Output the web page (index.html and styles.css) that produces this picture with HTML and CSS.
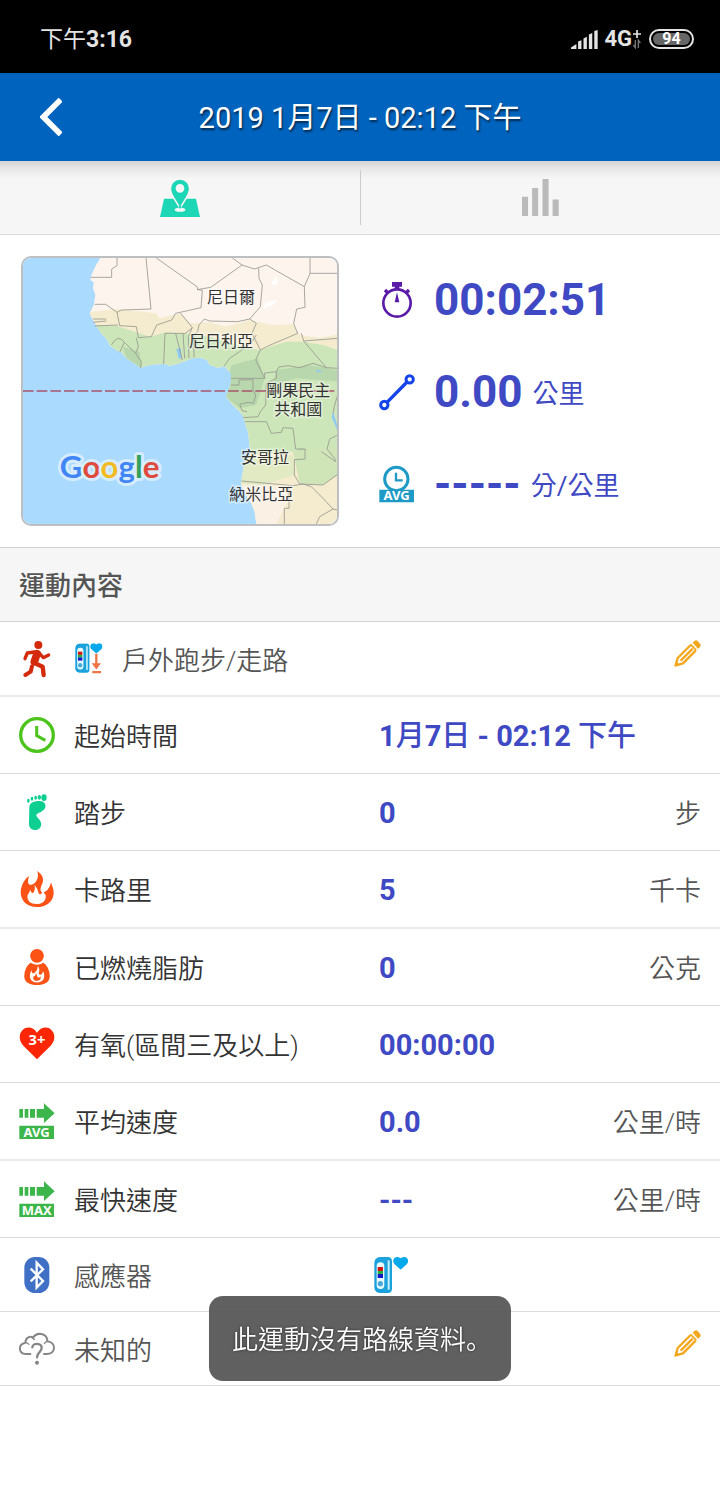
FILE: index.html
```html
<!DOCTYPE html>
<html lang="zh-Hant">
<head>
<meta charset="utf-8">
<meta name="viewport" content="width=device-width, initial-scale=1">
<title>2019 1月7日 - 02:12 下午</title>
<link rel="stylesheet" href="styles.css">
</head>
<body>
<svg class="defs" aria-hidden="true">
  <symbol id="band" viewBox="0 0 54 108">
    <path d="M10 2Q14 0 20 0H42Q53 0 54 12V96Q53 108 42 108H20Q12 108 8 105Q1 100 1 92V16Q2 6 10 2Z" fill="#1ba1dc"/>
    <path d="M44 10V98" stroke="#c4f0fb" stroke-width="6"/>
    <rect x="8" y="16" width="23" height="80" rx="11" fill="#e8fafe"/>
    <rect x="11" y="30" width="16" height="12" fill="#d4140c"/>
    <rect x="11" y="42" width="16" height="9" fill="#21b33a"/>
    <rect x="11" y="51" width="16" height="12" fill="#1414c8"/>
    <circle cx="19" cy="80" r="8" fill="#4aa9d8"/>
  </symbol>
  <symbol id="heart" viewBox="0 0 46 38">
    <path d="M23 38L4 21C-3 12 2 1 11 0C17 0 20 2 23 4C26 2 29 0 35 0C44 1 49 12 42 21Z" fill="#08a9ea"/>
  </symbol>
  <symbol id="pencil" viewBox="0 0 81 81">
    <g fill="none" stroke="#f2a71e" stroke-width="7" stroke-linejoin="round">
      <path d="M50 15L11 54L5 76L27 70L65 32"/>
      <path d="M20 62L56 26"/>
    </g>
    <path d="M56 8L61 3Q66 -2 71 3L78 11Q82 16 78 21L72 26Z" fill="#f2a71e"/>
    <path d="M50 13L67 31" stroke="#f2a71e" stroke-width="5"/>
    <path d="M1 80L6 64L17 75Z" fill="#f2a71e"/>
  </symbol>
  <symbol id="speed" viewBox="0 0 108 60">
    <path d="M1 18H12V44H1ZM17 18H28V44H17ZM33 18H48V44H33ZM53 18H75V1L107 31L75 60V44H53Z" fill="#3cb54a"/>
  </symbol>
</svg>

<div class="status">
  <span class="status__time">下午<b>3:16</b></span>
  <span class="status__side">
    <svg class="status__signal" viewBox="0 0 80 56"><path d="M0 56V52L16 41V56ZM21 34L31 30V56H21ZM37 25L47 20V56H37ZM53 13L63 9V56H53ZM69 3L79 0V56H69Z" fill="#e4e4e4"/></svg>
    <span class="status__net">4G</span>
    <svg class="status__plus" viewBox="0 0 30 60"><path d="M15 3V27M3 15H27" stroke="#e4e4e4" stroke-width="5"/><path d="M10 33V56L4 48M19 57V34L25 42" fill="none" stroke="#777" stroke-width="4"/></svg>
    <span class="battery"><span class="battery__level">94</span></span>
  </span>
</div>

<header class="bar">
  <button class="bar__back" type="button" aria-label="返回"><svg viewBox="0 0 66 114"><path d="M62 5L10 57L62 109" fill="none" stroke="#fff" stroke-width="17"/></svg></button>
  <h1 class="bar__title">2019 1月7日 - 02:12 下午</h1>
</header>

<nav class="tabs">
  <button class="tabs__item" type="button" aria-label="地圖">
    <svg class="tabs__map" viewBox="0 0 120 114">
      <path d="M12 59H108L120 114H0Z" fill="#1dd6b6"/>
      <path d="M60 0C42 0 31 13 31 29C31 48 46 61 60 88C74 61 89 48 89 29C89 13 78 0 60 0Z" fill="#1dd6b6" stroke="#f6f6f6" stroke-width="5"/>
      <circle cx="60" cy="28" r="13" fill="#f6f6f6"/>
      <ellipse cx="60" cy="92" rx="16" ry="6" fill="#f6f6f6"/>
      <path d="M55 80H65L60 91Z" fill="#1dd6b6"/>
    </svg>
  </button>
  <button class="tabs__item" type="button" aria-label="圖表">
    <svg class="tabs__chart" viewBox="0 0 110 110"><path d="M0 53H18V110H0ZM30 27H48V110H30ZM61 0H79V110H61ZM91 61H109V110H91Z" fill="#bababa"/></svg>
  </button>
</nav>

<main>
  <section class="summary">
    <div class="map">
      <svg class="map__art" viewBox="40 39 942 798" preserveAspectRatio="xMidYMid slice">
        <defs><clipPath id="land"><path id="coast" d="M272 39L258 62 245 90 242 105 252 112 250 130 257 150 252 180 240 205 250 225 262 245 275 265 290 280 300 300 318 315 335 322 350 340 378 358 393 369 410 362 440 358 465 357 480 362 500 358 522 350 548 340 575 338 592 345 600 360 625 368 645 364 655 375 664 385 664 410 660 425 655 440 650 455 665 475 685 495 700 512 705 530 715 560 720 600 722 620 705 650 700 680 694 715 705 745 725 775 735 800 740 837H990V30Z"/></clipPath></defs>
        <path d="M0 0H1000V900H0Z" fill="#abdaff"/>
        <g clip-path="url(#land)">
          <path d="M200 0H1000V900H200Z" fill="#fdf4ee"/>
          <path d="M230 202L320 192 400 200 440 205 450 220 510 205 545 235 600 232 650 245 720 225 790 240 850 238 870 270 930 278 1000 265V900H640V350L230 300Z" fill="#f5ecd0"/>
          <path d="M230 240L320 242 380 262 420 275 470 262 530 266 600 275 680 300 750 315 830 290 880 290 940 300 1000 320V640L850 620 700 630 600 380 390 400 230 290Z" fill="#cde6b9"/>
          <path d="M340 305L390 320 395 370 350 345ZM665 360L745 340 765 400 740 480 690 490 640 450ZM800 375L900 360 984 375 984 410 860 400 790 420ZM870 610L940 620 975 650 920 670 860 650Z" fill="#b9d7ad"/>
          <path d="M700 640L850 630 855 690 760 720 690 715Z" fill="#e1eac2"/>
          <path d="M850 620L984 600V690L940 720 870 715Z" fill="#cfe5b8"/>
          <path d="M690 720L820 725 835 765 800 837H730Z" fill="#faf0e4"/>
          <path d="M770 172L802 165 790 180 760 190ZM800 93L803 117 782 120Z" fill="#fff"/>
          <path d="M500 312L514 310 515 340 508 342ZM970 500L984 545 984 560 966 515ZM920 374L942 379 920 382Z" fill="#8fcaf5"/>
        </g>
        <g fill="none" stroke="#96978f" stroke-width="2.5">
          <path d="M322 39V62L306 72V97H243M409 39L424 192 335 195 322 202 288 178 255 178M440 39L562 125 564 134 578 136 574 188 498 205 486 225 441 240 425 275 386 278 380 245 330 242 322 202M562 134L603 127 697 60 668 39M697 60L734 72 770 60 884 125 901 85V39M901 85H984M884 125L886 187 861 192 852 236 864 265 775 303 752 315 727 265 740 235 720 222 684 230 600 228 584 222 568 240 564 260M747 70L748 100 758 120 752 185 720 222M513 205L548 248 526 266 520 266 525 340M548 248L536 275 538 340M564 260L552 270 553 338M466 265H520M466 265L462 357M498 265L518 345M250 222H290M250 232L290 228M255 243L325 240M380 278L386 305 378 325 395 350 393 369M305 300Q325 265 344 292L330 322M344 292L378 325"/>
          <path d="M643 364L660 340 690 320 727 290 740 270M752 315L738 345 765 400H664M765 400L765 384 800 380 808 366 835 362 870 368 910 355 950 368 984 370M875 265L882 288 984 280M882 288L950 368M664 420H688V405L730 404V435L738 450 732 475 715 472 690 478 697 497 712 500M800 380V400L770 415 768 480 752 500 745 515 700 518M705 530H770L785 565 815 562 820 548 850 550 858 612H886V642L854 644V690L870 717 940 720 984 688M695 708L850 722 880 717M838 725V790H824V837M880 717L905 725 940 760 970 792 984 795M970 792L930 815 920 837M984 450L975 480 970 505M984 570L960 582 952 612 975 640 978 650 935 620"/>
        </g>
        <path d="M40 438H982" stroke="#a8566c" stroke-width="5" stroke-dasharray="32 9"/>
        <g class="map__labels">
          <text x="664" y="175">尼日爾</text>
          <text x="634" y="307">尼日利亞</text>
          <text x="866" y="454">剛果民主</text>
          <text x="866" y="510">共和國</text>
          <text x="766" y="654">安哥拉</text>
          <text x="755" y="766">納米比亞</text>
        </g>
        <text class="map__logo" x="300" y="700"><tspan fill="#4285f4">G</tspan><tspan fill="#df4a3d">o</tspan><tspan fill="#f3bb22">o</tspan><tspan fill="#4285f4">g</tspan><tspan fill="#34a05a">l</tspan><tspan fill="#df4a3d">e</tspan></text>
      </svg>
    </div>
    <div class="stats">
      <div class="stat">
        <svg class="icon" viewBox="57 65 108 108"><g fill="none" stroke="#5a1ba8"><circle cx="111" cy="128" r="41" stroke-width="8"/><path d="M75 89L84 98M147 89L138 98" stroke-width="10"/></g><path d="M96 65H126V79H118V87H104V79H96ZM111 96L118 126H104Z" fill="#5a1ba8"/></svg>
        <strong class="stat__value">00:02:51</strong>
      </div>
      <div class="stat">
        <svg class="icon" viewBox="57 338 108 108"><g fill="none" stroke="#1443ea" stroke-width="9"><circle cx="149" cy="354" r="11"/><circle cx="73" cy="431" r="11"/><path d="M141 362L81 423" stroke-width="10"/></g></svg>
        <strong class="stat__value">0.00</strong><span class="stat__unit">公里</span>
      </div>
      <div class="stat">
        <svg class="icon" viewBox="57 612 108 108"><circle cx="109" cy="651" r="35" fill="none" stroke="#1e9ac6" stroke-width="9"/><path d="M108 632V655H128" fill="none" stroke="#1e9ac6" stroke-width="7"/><path d="M58 683H162V721H58Z" fill="#1e9ac6"/><text class="icon__tag" x="110" y="715">AVG</text></svg>
        <strong class="stat__value">-----</strong><span class="stat__unit">分/公里</span>
      </div>
    </div>
  </section>

  <h2 class="heading">運動內容</h2>

  <ul class="list">
    <li class="row row--short row--soft">
      <div class="row__name">
        <svg class="icon" viewBox="57 288 108 108"><g fill="none" stroke="#d42a0c" stroke-linecap="round" stroke-linejoin="round"><path d="M75 341L82 324L103 321" stroke-width="10"/><path d="M111 326L103 350" stroke-width="23"/><path d="M117 324L130 338L146 330" stroke-width="10"/><path d="M105 355L128 365L131 390" stroke-width="13"/><path d="M96 364L92 380L76 390" stroke-width="12"/></g><circle cx="115" cy="300" r="12" fill="#d42a0c"/></svg>
        <svg class="device" viewBox="0 0 84 92"><use href="#band" x="0" y="0" width="44" height="90"/><use href="#heart" x="45" y="0" width="38" height="31"/><path d="M64 32V68M52 87H78" stroke="#ee7446" stroke-width="7"/><path d="M50 60H78L64 79Z" fill="#ee7446"/></svg>
        <span class="row__label row__label--dim">戶外跑步/走路</span>
      </div>
      <div class="row__data"><button class="edit" type="button" aria-label="編輯運動"><svg viewBox="0 0 81 81"><use href="#pencil"/></svg></button></div>
    </li>
    <li class="row">
      <div class="row__name">
        <svg class="icon" viewBox="57 515 108 108"><circle cx="111" cy="569" r="49" fill="none" stroke="#4cc41c" stroke-width="10"/><path d="M110 542V571L136 585" fill="none" stroke="#4cc41c" stroke-width="9"/></svg>
        <span class="row__label">起始時間</span>
      </div>
      <div class="row__data"><strong class="row__value">1<span class="han">月</span>7<span class="han">日</span> - 02:12 <span class="han">下午</span></strong></div>
    </li>
    <li class="row">
      <div class="row__name">
        <svg class="icon" viewBox="57 56 108 108"><g fill="#0ecf92"><path d="M88 95C88 82 105 76 120 77C134 78 138 88 136 96C133 107 118 112 111 116C104 122 117 128 122 139C128 154 117 164 105 164C92 163 87 155 87 145Z"/><ellipse cx="132" cy="67" rx="8" ry="10"/><ellipse cx="118" cy="66" rx="5" ry="7"/><ellipse cx="107" cy="67" rx="4" ry="6"/><ellipse cx="96" cy="70" rx="4" ry="6"/><ellipse cx="85" cy="76" rx="4" ry="6"/></g></svg>
        <span class="row__label">踏步</span>
      </div>
      <div class="row__data"><strong class="row__value">0</strong><span class="row__unit">步</span></div>
    </li>
    <li class="row row--soft">
      <div class="row__name">
        <svg class="icon" viewBox="57 290 108 108"><path d="M112 290C130 303 133 316 125 332C119 344 121 355 130 354C143 351 150 338 153 324C157 336 162 346 161 358C158 385 136 398 111 398C84 398 62 382 62 352C63 334 75 311 88 305C82 318 83 330 91 332C105 331 119 313 112 290Z" fill="#fb5215"/><path d="M103 331C116 345 113 354 118 359C126 362 127 353 126 347C134 353 132 360 137 361C140 379 127 389 110 389C92 389 79 379 83 362C86 357 90 354 90 345C93 355 98 360 102 352C106 344 105 338 103 331Z" fill="#fff"/></svg>
        <span class="row__label">卡路里</span>
      </div>
      <div class="row__data"><strong class="row__value">5</strong><span class="row__unit">千卡</span></div>
    </li>
    <li class="row">
      <div class="row__name">
        <svg class="icon" viewBox="57 520 108 110"><circle cx="111" cy="541" r="21" fill="#fb5215"/><path d="M91 562Q111 575 131 562Q150 576 150 604C149 623 132 630 111 630C90 630 73 623 72 604Q72 576 91 562Z" fill="#fb5215"/><path d="M112 571C121 579 118 588 116 595C122 604 127 596 130 588C138 607 131 622 111 622C92 622 83 607 94 584C94 592 98 597 102 593C109 589 115 580 112 571Z" fill="#fff"/><path d="M107 593C113 600 110 605 115 608C120 608 119 604 122 604C124 613 118 617 110 617C101 617 97 611 101 603Q107 604 107 593Z" fill="#fb5215"/></svg>
        <span class="row__label">已燃燒脂肪</span>
      </div>
      <div class="row__data"><strong class="row__value">0</strong><span class="row__unit">公克</span></div>
    </li>
    <li class="row">
      <div class="row__name">
        <svg class="icon" viewBox="57 64 108 108"><path d="M111 164L70 123C55 107 57 86 68 76C82 63 101 69 111 84C121 69 141 63 154 76C166 87 167 107 152 123Z" fill="#fb2606"/><text class="icon__zone" x="111" y="122">3+</text></svg>
        <span class="row__label">有氧(區間三及以上)</span>
      </div>
      <div class="row__data"><strong class="row__value">00:00:00</strong></div>
    </li>
    <li class="row row--soft">
      <div class="row__name">
        <svg class="icon" viewBox="0 0 108 108"><use href="#speed" width="108" height="60"/><path d="M1 68H105V108H1Z" fill="#3cb54a"/><text class="icon__tag" x="53" y="102">AVG</text></svg>
        <span class="row__label">平均速度</span>
      </div>
      <div class="row__data"><strong class="row__value">0.0</strong><span class="row__unit">公里/時</span></div>
    </li>
    <li class="row">
      <div class="row__name">
        <svg class="icon" viewBox="0 0 108 108"><use href="#speed" width="108" height="60"/><path d="M1 68H105V108H1Z" fill="#3cb54a"/><text class="icon__tag" x="53" y="102">MAX</text></svg>
        <span class="row__label">最快速度</span>
      </div>
      <div class="row__data"><strong class="row__value">---</strong><span class="row__unit">公里/時</span></div>
    </li>
    <li class="row row--short">
      <div class="row__name">
        <svg class="icon" viewBox="57 93 108 108"><rect x="73" y="93" width="75" height="108" rx="32" fill="#3f70c6"/><path d="M92 128L129 165L110 185V110L129 130L92 166" fill="none" stroke="#fff" stroke-width="7"/></svg>
        <span class="row__label row__label--dim">感應器</span>
      </div>
      <div class="row__data row__data--sensor"><svg class="icon" viewBox="0 0 108 108"><use href="#band" width="54" height="108"/><use href="#heart" x="57" y="0" width="46" height="38"/></svg></div>
    </li>
    <li class="row row--short">
      <div class="row__name">
        <svg class="icon" viewBox="57 315 108 108"><g fill="none" stroke="#868686" stroke-width="6" stroke-linecap="round"><path d="M91 384H77C55 382 53 355 76 350C77 333 91 329 99 336C109 317 142 320 142 346C170 349 168 384 140 384H132"/><path d="M76 350Q83 350 87 355M142 346Q135 348 133 353M99 336L103 341" stroke-width="4"/><path d="M97 364C98 350 125 350 125 366C125 378 111 379 111 394" stroke-width="7"/></g><circle cx="111" cy="410" r="6" fill="#868686"/></svg>
        <span class="row__label row__label--dim">未知的</span>
      </div>
      <div class="row__data"><button class="edit" type="button" aria-label="編輯備註"><svg viewBox="0 0 81 81"><use href="#pencil"/></svg></button></div>
    </li>
  </ul>
</main>

<div class="toast" role="status">此運動沒有路線資料<span class="toast__stop" lang="zh-Hans">。</span></div>
</body>
</html>
```
FILE: styles.css
```css
* {
  box-sizing: border-box;
}

body {
  margin: 0;
  background: #fff;
  color: #333;
  font-family: Roboto, "Noto Sans CJK TC", sans-serif;
  font-size: 26px;
  line-height: 36px;
}

button {
  margin: 0;
  padding: 0;
  border: 0;
  background: none;
  cursor: pointer;
}

svg {
  display: block;
  flex: none;
}

.defs {
  position: absolute;
  width: 0;
  height: 0;
}

/* Status bar */
.status {
  display: flex;
  align-items: center;
  justify-content: space-between;
  height: 73px;
  padding: 5px 26px 0 40px;
  background: #000;
  color: #e4e4e4;
  font-size: 23px;
}

.status__time {
  padding-top: 2px;
}

.status__side {
  display: flex;
  align-items: center;
}

.status__signal {
  width: 27px;
  height: 19px;
  margin-right: 6px;
}

.status__net {
  font-weight: 700;
  font-size: 22px;
}

.status__plus {
  width: 10px;
  height: 20px;
  margin-right: 7px;
}

.battery {
  display: block;
  width: 45px;
  padding: 2px;
  border: 2px solid #e4e4e4;
  border-radius: 10px;
}

.battery__level {
  display: block;
  border-radius: 6px;
  background: #666;
  color: #fff;
  font-size: 16px;
  font-weight: 700;
  line-height: 12px;
  text-align: center;
}

/* Title bar */
.bar {
  display: grid;
  grid-template-columns: 100px 1fr 100px;
  align-items: center;
  height: 88px;
  background: #0063bd;
  color: #fff;
}

.bar__back {
  display: flex;
  align-items: center;
  height: 88px;
  padding-left: 40px;
}

.bar__back svg {
  width: 22px;
  height: 38px;
}

.bar__title {
  margin: 0;
  padding-top: 2px;
  font-size: 29px;
  font-weight: 400;
  line-height: 40px;
  text-align: center;
  text-shadow: 1px 2px 2px rgba(0, 0, 0, .6);
}

/* Tabs */
.tabs {
  display: flex;
  height: 74px;
  padding: 9px 0;
  border-bottom: 1px solid #dcdcdc;
  background: linear-gradient(#d4d4d4, #e8e8e8 8px, #f6f6f6 18px);
}

.tabs__item {
  display: flex;
  flex: 1;
  align-items: center;
  justify-content: center;
}

.tabs__item:first-child {
  border-right: 1px solid #ccc;
}

.tabs__map {
  width: 40px;
  height: 38px;
}

.tabs__chart {
  width: 37px;
  height: 37px;
}

/* Map and headline figures */
.summary {
  display: grid;
  grid-template-columns: 1fr 1fr;
}

.map {
  height: 270px;
  margin: 21px;
  overflow: hidden;
  border: 2px solid #bdbfc1;
  border-radius: 10px;
}

.map__art {
  width: 100%;
  height: 100%;
}

.map__labels {
  fill: #333;
  stroke: rgba(255, 255, 255, .45);
  stroke-width: 9px;
  paint-order: stroke;
  font-size: 48px;
  text-anchor: middle;
}

.map__logo {
  stroke: rgba(225, 242, 255, .8);
  stroke-width: 18px;
  stroke-linejoin: round;
  paint-order: stroke;
  font-family: Lato, sans-serif;
  font-size: 94px;
  font-weight: 700;
  text-anchor: middle;
}

.stats {
  display: grid;
  grid-template-rows: repeat(3, 92px);
  padding: 19px 0 0 19px;
}

.stat {
  display: flex;
  align-items: center;
  color: #4049c4;
}

.stat__value {
  margin: 0 10px 0 19px;
  font-size: 44px;
  font-weight: 700;
}

.stat__unit {
  padding-top: 4px;
}

.icon {
  width: 36px;
  height: 36px;
  overflow: visible;
}

.icon__tag {
  fill: #fff;
  font-family: "Noto Sans", sans-serif;
  font-size: 39px;
  font-weight: 700;
  text-anchor: middle;
}

.icon__zone {
  fill: #fff;
  font-family: "Noto Sans", sans-serif;
  font-size: 44px;
  font-weight: 700;
  text-anchor: middle;
}

/* Detail list */
.heading {
  margin: 0;
  padding: 20px 19px 17px;
  border: 1px solid #d2d2d2;
  border-width: 1px 0;
  background: #f6f6f6;
  color: #555;
  font-size: 26px;
  font-weight: 500;
  line-height: 36px;
}

.list {
  margin: 0;
  padding: 0;
  list-style: none;
}

.row {
  display: grid;
  grid-template-columns: 1fr 1fr;
  grid-template-rows: 76px;
  border-bottom: 1px solid #dcdcdc;
}

.row--short {
  grid-template-rows: 73px;
}

.row--soft {
  border-bottom: 2px solid #eaeaea;
}

.row__name,
.row__data {
  display: flex;
  align-items: center;
  padding: 0 19px;
}

.row__data--sensor {
  padding-left: 14px;
}

.row__label,
.row__unit {
  padding-top: 4px;
  font-weight: 350;
  white-space: nowrap;
}

.row__label {
  margin-left: 19px;
}

.row__label--dim {
  color: #555;
}

.device {
  width: 28px;
  height: 31px;
  margin-left: 20px;
}

.row__value {
  padding-top: 2px;
  color: #4049c4;
  font-size: 29px;
  font-weight: 700;
  white-space: nowrap;
}

.han {
  font-weight: 500;
}

.row__unit {
  margin-left: auto;
  color: #555;
}

.edit {
  margin-left: auto;
  padding-bottom: 10px;
}

.edit svg {
  width: 27px;
  height: 27px;
}

/* Notice */
.toast {
  position: fixed;
  bottom: 117px;
  left: 50%;
  padding: 26px 19px 23px 23px;
  border-radius: 14px;
  background: rgba(86, 86, 86, .94);
  color: #fff;
  font-weight: 350;
  text-shadow: 0 0 3px rgba(0, 0, 0, .6);
  white-space: nowrap;
  transform: translateX(-50%);
}

.toast__stop {
  font-family: "Noto Sans CJK SC", sans-serif;
  line-height: 26px;
}
```
